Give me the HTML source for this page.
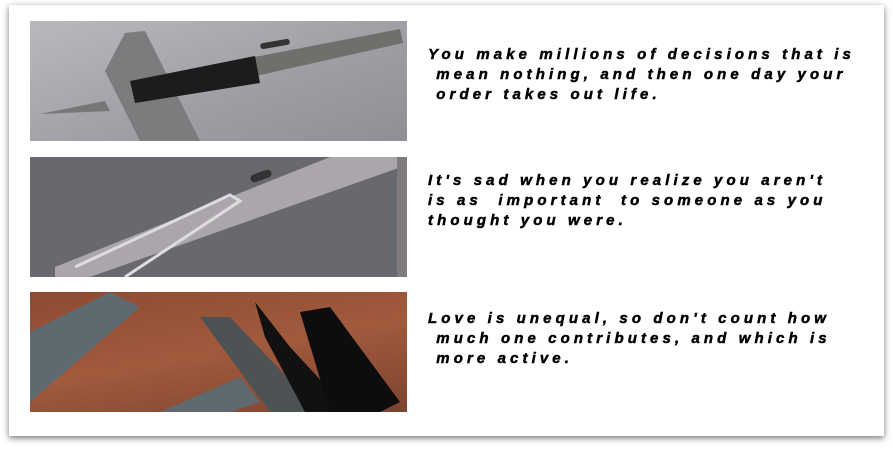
<!DOCTYPE html>
<html><head><style>
body{margin:0;width:893px;height:450px;background:#fff;overflow:hidden;position:relative;font-family:"Liberation Sans",sans-serif}
.card{position:absolute;left:9px;top:5px;width:875px;height:431px;background:#fff;box-shadow:0 2px 6px rgba(0,0,0,.55)}
.img{position:absolute;left:30px;width:377px;height:120px;overflow:hidden}
.t{position:absolute;left:428px;font-weight:bold;font-style:italic;font-size:15px;letter-spacing:4.1px;line-height:20px;color:#000;white-space:pre;-webkit-text-stroke:0.5px #000}
</style></head><body>
<div class="card"></div>
<div class="img" style="top:21px;background:linear-gradient(160deg,#b9b9bd,#9d9da3 60%,#8f8f95)">
<svg width="377" height="120"><polygon points="75,50 95,12 115,10 170,120 110,120" fill="#7c7c7e"/>
<polygon points="100,60 370,8 373,22 105,82" fill="#6f706c"/>
<polygon points="100,60 225,35 230,62 105,82" fill="#1c1c1c"/>
<polygon points="10,93 75,80 80,90" fill="#777"/>
<rect x="230" y="20" width="30" height="6" rx="3" fill="#333" transform="rotate(-10 245 23)"/></svg></div>
<div class="img" style="top:157px;background:#68686f">
<svg width="377" height="120"><polygon points="25,110 300,0 377,0 377,8 60,120 25,120" fill="#aaa6ab"/>
<polyline points="45,110 200,38 210,44 95,120" fill="none" stroke="#ddd" stroke-width="3"/>
<rect x="220" y="15" width="22" height="8" rx="4" fill="#333" transform="rotate(-20 231 19)"/>
<rect x="367" y="0" width="10" height="120" fill="#807a7d"/></svg></div>
<div class="img" style="top:292px;background:linear-gradient(170deg,#8e4a33,#a15a3c 50%,#7d4330)">
<svg width="377" height="120"><polygon points="0,40 80,0 110,15 0,110" fill="#5e6a70"/>
<polygon points="130,120 210,85 230,110 200,120" fill="#5e6a70"/>
<polygon points="170,25 200,25 290,120 240,120" fill="#4d5255"/>
<polygon points="225,10 260,55 320,120 275,120 235,45" fill="#111"/>
<polygon points="270,20 300,15 370,110 350,120 300,120" fill="#0d0d10"/></svg></div>
<div class="t" style="top:45px">You make millions of decisions that is
 mean nothing, and then one day your
 order takes out life.</div>
<div class="t" style="top:171px">It's sad when you realize you aren't
is as  important  to someone as you
thought you were.</div>
<div class="t" style="top:309px">Love is unequal, so don't count how
 much one contributes, and which is
 more active.</div>
</body></html>
